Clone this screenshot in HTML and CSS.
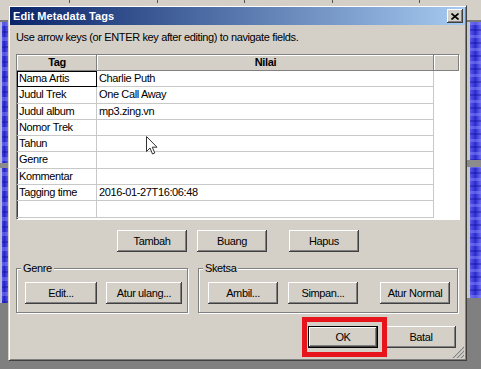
FILE: index.html
```html
<!DOCTYPE html>
<html lang="id">
<head>
    <meta charset="UTF-8">
    <title>Edit Metadata Tags</title>
    <link rel="stylesheet" href="styles.css">
</head>
<body>
    <!-- Desktop behind the dialog (waveform tracks) -->
    <div class="desktop">
        <div class="dialog">
            <!-- Title bar -->
            <div class="titlebar">
                <span class="title">Edit Metadata Tags</span>
                <button class="close" aria-label="Close">
                    <svg width="8" height="7" viewBox="0 0 8 7">
                        <path d="M0.5 0.5 L7.5 6.5 M7.5 0.5 L0.5 6.5" stroke="#000" stroke-width="1.6" fill="none"/>
                    </svg>
                </button>
            </div>

            <div class="content">
                <p class="hint">Use arrow keys (or ENTER key after editing) to navigate fields.</p>

                <!-- Tag grid -->
                <div class="grid">
                    <div class="cell head">Tag</div>
                    <div class="cell head">Nilai</div>
                    <div class="cell head pad"></div>

                    <div class="cell selected">Nama Artis</div>
                    <div class="cell">Charlie Puth</div>
                    <div class="cell pad"></div>

                    <div class="cell">Judul Trek</div>
                    <div class="cell">One Call Away</div>
                    <div class="cell pad"></div>

                    <div class="cell">Judul album</div>
                    <div class="cell">mp3.zing.vn</div>
                    <div class="cell pad"></div>

                    <div class="cell">Nomor Trek</div>
                    <div class="cell"></div>
                    <div class="cell pad"></div>

                    <div class="cell">Tahun</div>
                    <div class="cell"></div>
                    <div class="cell pad"></div>

                    <div class="cell">Genre</div>
                    <div class="cell"></div>
                    <div class="cell pad"></div>

                    <div class="cell">Kommentar</div>
                    <div class="cell"></div>
                    <div class="cell pad"></div>

                    <div class="cell">Tagging time</div>
                    <div class="cell">2016-01-27T16:06:48</div>
                    <div class="cell pad"></div>

                    <div class="cell"></div>
                    <div class="cell"></div>
                    <div class="cell pad"></div>

                    <!-- Mouse pointer -->
                    <svg class="cursor" width="12" height="19" viewBox="0 0 12 19">
                        <path d="M0.5 0.5 L0.5 15.5 L4 12 L6.5 18 L8.8 17 L6.3 11.2 L11 11.2 Z" fill="#fff" stroke="#333" stroke-width="1"/>
                    </svg>
                </div>

                <!-- Row actions -->
                <div class="actions">
                    <button class="btn">Tambah</button>
                    <button class="btn gap-s">Buang</button>
                    <button class="btn gap-l">Hapus</button>
                </div>

                <!-- Group boxes -->
                <div class="groups">
                    <div class="group genre">
                        <span class="group-label">Genre</span>
                        <button class="btn w72">Edit...</button>
                        <button class="btn w76 gap-xs">Atur ulang...</button>
                    </div>
                    <div class="group sketsa">
                        <span class="group-label">Sketsa</span>
                        <button class="btn">Ambil...</button>
                        <button class="btn gap-s">Simpan...</button>
                        <button class="btn gap-l">Atur Normal</button>
                    </div>
                </div>

                <!-- Dialog buttons -->
                <div class="footer">
                    <span class="ok-wrap">
                        <button class="btn default">OK</button>
                    </span>
                    <button class="btn batal">Batal</button>
                </div>
            </div>

            <!-- Size grip -->
            <svg class="grip" width="12" height="12" viewBox="0 0 12 12">
                <path d="M11 1 L1 11 M11 5 L5 11 M11 9 L9 11" stroke="#fff" stroke-width="1" fill="none"/>
                <path d="M12 1 L1 12 M12 5 L5 12 M12 9 L9 12" stroke="#808080" stroke-width="1.2" fill="none"/>
            </svg>
        </div>
    </div>
</body>
</html>
```

FILE: styles.css
```css
/* General */
* {
    box-sizing: border-box;
}

body {
    margin: 0;
    font-family: "Liberation Sans", Arial, sans-serif;
    font-size: 11px;
    letter-spacing: -0.37px;
    color: #000;
}

/* Desktop with the audio tracks behind the dialog */
.desktop {
    width: 481px;
    height: 369px;
    overflow: hidden;
    padding: 5px 0 0 8px;
    background:
        repeating-linear-gradient(90deg, transparent 0 69px, #555 69px 70px, transparent 70px 87.5px) 0 0 / 100% 3px no-repeat,
        linear-gradient(#d4d0c8, #d4d0c8) 0 0 / 100% 20px no-repeat,
        linear-gradient(#7a7a7a, #7a7a7a) 0 20px / 100% 2px no-repeat,
        linear-gradient(#8c8c8c, #8c8c8c) 0 163px / 8px 5px no-repeat,
        linear-gradient(#8c8c8c, #8c8c8c) 467px 160px / 14px 7px no-repeat,
        repeating-linear-gradient(180deg, rgba(140, 140, 255, 0.45) 0 3px, transparent 3px 7px, rgba(10, 10, 150, 0.35) 7px 9px, transparent 9px 13px) 470px 22px / 11px 276px no-repeat,
        linear-gradient(90deg, #c8c8c8 0 3px, #5a5ae6 3px, #2b2bd0 60%, #6b6bee) 467px 22px / 14px 276px no-repeat,
        repeating-linear-gradient(180deg, rgba(140, 140, 255, 0.45) 0 4px, transparent 4px 9px, rgba(10, 10, 150, 0.35) 9px 11px, transparent 11px 15px) 2px 22px / 6px 281px no-repeat,
        linear-gradient(90deg, #b8b8d8 0 2px, #4646de 2px, #2323c8 55%, #5c5ce8) 0 22px / 8px 281px no-repeat,
        #808080;
}

/* Dialog window */
.dialog {
    position: relative;
    width: 459px;
    height: 356px;
    padding: 1px;
    background: #d4d0c8;
    border: 1px solid;
    border-color: #d4d0c8 #404040 #404040 #d4d0c8;
    box-shadow: inset 1px 1px #fff, inset -1px -1px #808080;
}

.titlebar {
    display: flex;
    align-items: center;
    justify-content: space-between;
    height: 18px;
    padding: 0 2px 0 3px;
    background: linear-gradient(90deg, #0a246a, #a6caf0);
}

.title {
    color: #fff;
    font-weight: bold;
    letter-spacing: 0.1px;
}

.close {
    display: flex;
    align-items: center;
    justify-content: center;
    width: 16px;
    height: 14px;
    padding: 0;
    border: none;
    background: #d4d0c8;
    box-shadow: inset -1px -1px #404040, inset 1px 1px #fff, inset -2px -2px #808080;
}

/* Content */
.content {
    padding: 0 5px 0 6px;
}

.hint {
    margin: 6px 0 0 0;
    line-height: 13px;
}

/* Tag grid */
.grid {
    position: relative;
    display: grid;
    grid-template-columns: 80px 337px 25px;
    grid-template-rows: 16px;
    grid-auto-rows: 16.3px;
    height: 166px;
    margin-top: 10px;
    background: #fff;
    border: 1px solid;
    border-color: #808080 #fff #fff #808080;
    box-shadow: inset 1px 1px #404040;
}

.cell {
    padding: 0 2px;
    line-height: 15px;
    white-space: nowrap;
    overflow: hidden;
    border-right: 1px solid #c8c8c8;
    border-bottom: 1px solid #c8c8c8;
}

.cell.pad {
    border: none;
}

.cell.head {
    font-weight: bold;
    text-align: center;
    border: none;
    background: #d4d0c8;
    box-shadow: inset -1px -1px #808080, inset 1px 1px #fff;
}

.cell.selected {
    outline: 1px solid #000;
    outline-offset: -1px;
}

.cursor {
    position: absolute;
    left: 129px;
    top: 81px;
}

/* Buttons */
.btn {
    width: 70px;
    height: 22px;
    padding: 0;
    font-family: "Liberation Sans", Arial, sans-serif;
    font-size: 11px;
    letter-spacing: -0.37px;
    color: #000;
    background: #d4d0c8;
    border: none;
    box-shadow: inset -1px -1px #404040, inset 1px 1px #fff, inset -2px -2px #808080;
}

.btn.default {
    box-shadow: inset -1px -1px #000, inset 1px 1px #000, inset -2px -2px #404040, inset 2px 2px #fff, inset -3px -3px #808080;
}

.w72 { width: 72px; }
.w76 { width: 76px; }
.gap-xs { margin-left: 9px; }
.gap-s { margin-left: 10px; }
.gap-l { margin-left: 22px; }

.actions {
    display: flex;
    justify-content: center;
    margin-top: 10px;
}

/* Group boxes */
.groups {
    display: flex;
    gap: 10px;
    margin-top: 16px;
}

.group {
    position: relative;
    display: flex;
    height: 45px;
    padding: 13px 0 0 8px;
    border: 1px solid #808080;
    box-shadow: inset 1px 1px #fff, 1px 1px #fff;
}

.genre {
    width: 172px;
}

.sketsa {
    width: 260px;
    padding-left: 9px;
}

.group-label {
    position: absolute;
    top: -7px;
    left: 4px;
    padding: 0 2px;
    line-height: 13px;
    background: #d4d0c8;
}

/* Dialog buttons */
.footer {
    display: flex;
    justify-content: flex-end;
    gap: 8px;
    margin-top: 13px;
    padding-right: 4px;
}

.ok-wrap {
    position: relative;
    display: flex;
}

.ok-wrap::after {
    content: "";
    position: absolute;
    left: -6px;
    right: -9px;
    top: -9px;
    bottom: -9px;
    border: 5px solid #e8141c;
}

.grip {
    position: absolute;
    right: 2px;
    bottom: 2px;
}
```
